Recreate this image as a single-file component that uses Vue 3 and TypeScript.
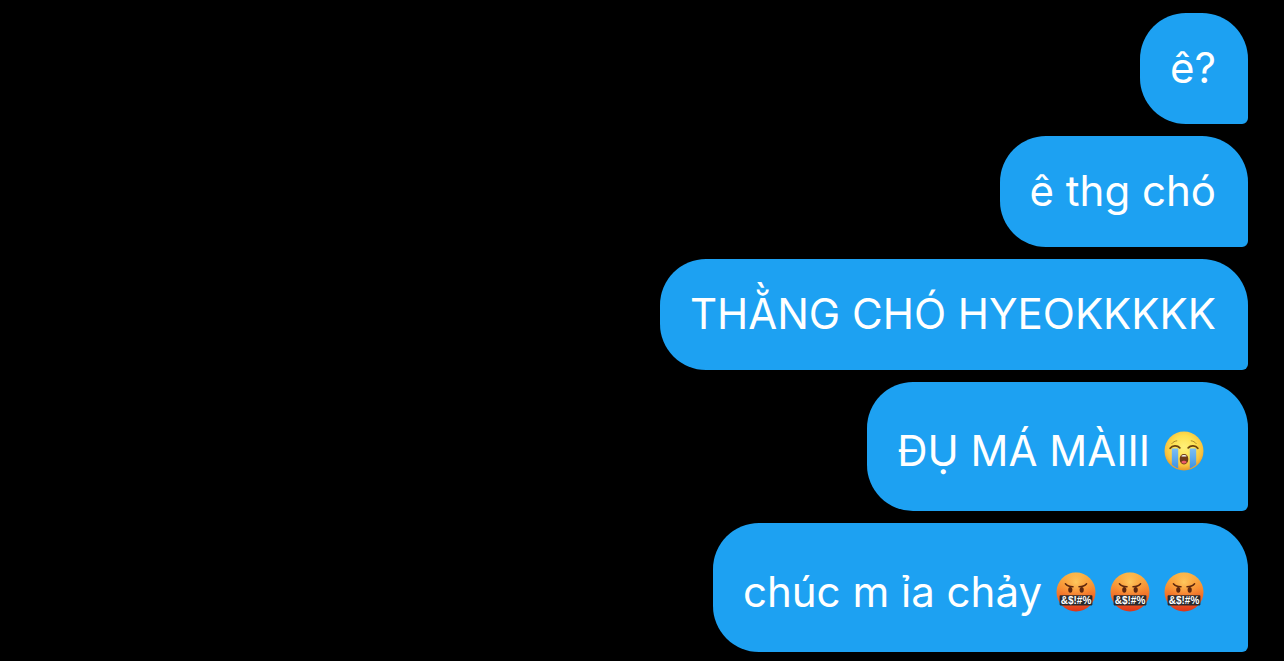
<script setup lang="ts">
type Emoji = 'sob' | 'curse'

interface Message {
  id: number
  text: string
  emojis: Emoji[]
}

const messages: Message[] = [
  { id: 1, text: 'ê?', emojis: [] },
  { id: 2, text: 'ê thg chó', emojis: [] },
  { id: 3, text: 'THẰNG CHÓ HYEOKKKKK', emojis: [] },
  { id: 4, text: 'ĐỤ MÁ MÀIII', emojis: ['sob'] },
  { id: 5, text: 'chúc m ỉa chảy', emojis: ['curse', 'curse', 'curse'] },
]
</script>

<template>
  <main class="chat">
    <svg class="defs" width="0" height="0" aria-hidden="true">
      <defs>
        <radialGradient id="sob-face" cx="50%" cy="40%" r="60%">
          <stop offset="0" stop-color="#fff07a" />
          <stop offset="0.5" stop-color="#fde04f" />
          <stop offset="0.8" stop-color="#f8c13e" />
          <stop offset="1" stop-color="#e5962b" />
        </radialGradient>
        <linearGradient id="curse-face" x1="0" y1="0" x2="0" y2="1">
          <stop offset="0" stop-color="#f8b545" />
          <stop offset="0.4" stop-color="#f78c32" />
          <stop offset="0.75" stop-color="#ee5a23" />
          <stop offset="1" stop-color="#dc3519" />
        </linearGradient>
        <radialGradient id="curse-glow" cx="50%" cy="25%" r="45%">
          <stop offset="0" stop-color="#ffd367" stop-opacity="0.8" />
          <stop offset="1" stop-color="#ffa53d" stop-opacity="0" />
        </radialGradient>
        <linearGradient id="tear" x1="0" y1="0" x2="0" y2="1">
          <stop offset="0" stop-color="#7dbdf3" />
          <stop offset="0.6" stop-color="#55a5ec" />
          <stop offset="1" stop-color="#3b91e5" />
        </linearGradient>
      </defs>
    </svg>

    <ul class="messages">
      <li
        v-for="message in messages"
        :key="message.id"
        class="bubble"
        :class="{ 'bubble-emoji': message.emojis.length > 0 }"
      >
        <span>{{ message.text }}</span>
        <template v-for="(emoji, index) in message.emojis" :key="index">
          <svg v-if="emoji === 'sob'" class="emoji" viewBox="0 0 40 40" role="img" aria-label="😭">
            <circle cx="20" cy="20" r="19.5" fill="url(#sob-face)" />
            <path d="M7.8 17.5h6.4v20c-2.4-.9-4.6-2.2-6.4-3.9z" fill="url(#tear)" />
            <path d="M25.8 17.5h6.4v16.1c-1.8 1.7-4 3-6.4 3.9z" fill="url(#tear)" />
            <g fill="none" stroke="#6b4310" stroke-linecap="round">
              <path d="M7.8 12.6c1.3-1.6 2.9-2.5 5-2.8M32.2 12.6c-1.3-1.6-2.9-2.5-5-2.8" stroke-width="1" stroke-opacity="0.55" />
              <path d="M6.2 17.2c2.2-2.8 7-3.2 9.6-.4M33.8 17.2c-2.2-2.8-7-3.2-9.6-.4" stroke-width="1.8" />
            </g>
            <path d="M20 23c2.8 0 4.3 2 4.3 5.1 0 3.2-1.5 5.3-4.3 5.3s-4.3-2.1-4.3-5.3c0-3.1 1.5-5.1 4.3-5.1z" fill="#6e3a17" />
            <path d="M17.6 24.6c1.4-.7 3.4-.7 4.8 0v1h-4.8z" fill="#fff" />
            <path d="M17.2 31c1.5-1.8 4.1-1.8 5.6 0-.6 1.1-1.6 1.6-2.8 1.6s-2.2-.5-2.8-1.6z" fill="#ed5b68" />
          </svg>
          <svg v-else class="emoji" viewBox="0 0 40 40" role="img" aria-label="🤬">
            <circle cx="20" cy="20" r="19.5" fill="url(#curse-face)" />
            <circle cx="20" cy="20" r="19.5" fill="url(#curse-glow)" />
            <ellipse cx="14.3" cy="17.8" rx="2.1" ry="2.9" fill="#5c260e" />
            <ellipse cx="25.7" cy="17.8" rx="2.1" ry="2.9" fill="#5c260e" />
            <path
              d="M9.4 11.8c1.6 1.9 4.2 3 7.6 3M30.6 11.8c-1.6 1.9-4.2 3-7.6 3"
              fill="none"
              stroke="#5c260e"
              stroke-width="1.5"
              stroke-linecap="round"
            />
            <rect x="3.6" y="23.2" width="32.8" height="10.2" rx="0.8" fill="#2a2a2e" />
            <text class="symbols" x="20" y="31.9" text-anchor="middle">&amp;$!#%</text>
          </svg>
        </template>
      </li>
    </ul>
  </main>
</template>

<style>
body {
  margin: 0;
  background: #000;
}
</style>

<style scoped>
.chat {
  box-sizing: border-box;
  min-height: 100vh;
  padding: 13px 36px 9px;
  background: #000;
  color: #fff;
  font-family: Inter, "Liberation Sans", sans-serif;
  font-size: 42px;
  line-height: 55px;
}

.defs {
  position: absolute;
}

.messages {
  display: flex;
  flex-direction: column;
  align-items: flex-end;
  gap: 12px;
  margin: 0;
  padding: 0;
  list-style: none;
}

.bubble {
  display: flex;
  align-items: center;
  gap: 14px;
  padding: 27px 32px 29px 30px;
  border-radius: 46px 46px 6px 46px;
  background: #1da1f2;
}

.bubble-emoji {
  padding: 41px 44px 33px 30px;
}

.emoji {
  display: block;
  flex: none;
  width: 40px;
  height: 40px;
}

.symbols {
  fill: #fff;
  font-family: "Liberation Sans", sans-serif;
  font-size: 10px;
  font-weight: 700;
}
</style>
